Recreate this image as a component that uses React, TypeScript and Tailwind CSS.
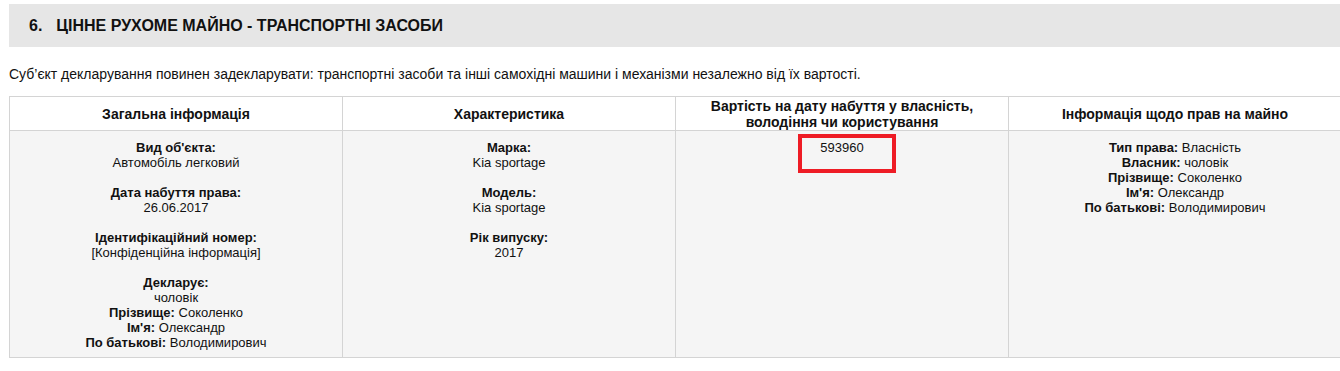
import React from "react";

type Line = { label?: string; value?: string };

function Block({ lines }: { lines: Line[] }) {
  return (
    <div>
      {lines.map((l, i) => (
        <div key={i}>
          {l.label && <span className="font-bold">{l.label}</span>}
          {l.label && l.value ? " " : null}
          {l.value}
        </div>
      ))}
    </div>
  );
}

function Stack({ label, value }: Line) {
  return (
    <div>
      <div className="font-bold">{label}</div>
      <div>{value}</div>
    </div>
  );
}

const headers = [
  "Загальна інформація",
  "Характеристика",
  "Вартість на дату набуття у власність, володіння чи користування",
  "Інформація щодо прав на майно",
];

export default function App() {
  return (
    <div className="min-h-[371px] bg-white text-[13px] leading-[15px] text-[#111]" style={{ fontFamily: '"Liberation Sans", Arial, sans-serif' }}>
      <div className="pt-[4px] pl-[9px]">
        <div className="flex h-[43px] items-center bg-[#e6e6e6] pl-[20px] text-[16px] font-bold text-[#111]">
          <span>6.</span>
          <span className="ml-[14px]">ЦІННЕ РУХОМЕ МАЙНО - ТРАНСПОРТНІ ЗАСОБИ</span>
        </div>
      </div>

      <p className="mt-[19px] pl-[9px] text-[14px] leading-[16px]">
        Суб’єкт декларування повинен задекларувати: транспортні засоби та інші самохідні машини і механізми незалежно від їх вартості.
      </p>

      <div className="mt-[14px] overflow-hidden pl-[9px]">
        <table className="w-[1332px] table-fixed border-collapse text-center">
          <thead>
            <tr className="h-[34px]">
              {headers.map((h) => (
                <th key={h} className="w-[333px] border border-[#d4d4d4] bg-white px-[30px] text-[14px] font-bold leading-[16px]">
                  {h}
                </th>
              ))}
            </tr>
          </thead>
          <tbody>
            <tr className="bg-[#f5f5f5] align-top">
              <td className="border border-[#d4d4d4] pt-[9px] pb-[7px]">
                <div className="flex flex-col gap-[15px]">
                  <Stack label="Вид об'єкта:" value="Автомобіль легковий" />
                  <Stack label="Дата набуття права:" value="26.06.2017" />
                  <Stack label="Ідентифікаційний номер:" value="[Конфіденційна інформація]" />
                  <div>
                    <div className="font-bold">Декларує:</div>
                    <div>чоловік</div>
                    <Block
                      lines={[
                        { label: "Прізвище:", value: "Соколенко" },
                        { label: "Ім'я:", value: "Олександр" },
                        { label: "По батькові:", value: "Володимирович" },
                      ]}
                    />
                  </div>
                </div>
              </td>
              <td className="border border-[#d4d4d4] pt-[9px] pb-[7px]">
                <div className="flex flex-col gap-[15px]">
                  <Stack label="Марка:" value="Kia sportage" />
                  <Stack label="Модель:" value="Kia sportage" />
                  <Stack label="Рік випуску:" value="2017" />
                </div>
              </td>
              <td className="border border-[#d4d4d4] pt-[9px] pb-[7px]">
                <div className="relative">
                  <div>593960</div>
                  <div className="absolute top-[-6px] left-[122px] h-[39px] w-[98px] border-[4px] border-[#ee1c25]" />
                </div>
              </td>
              <td className="border border-[#d4d4d4] pt-[9px] pb-[7px]">
                <Block
                  lines={[
                    { label: "Тип права:", value: "Власність" },
                    { label: "Власник:", value: "чоловік" },
                    { label: "Прізвище:", value: "Соколенко" },
                    { label: "Ім'я:", value: "Олександр" },
                    { label: "По батькові:", value: "Володимирович" },
                  ]}
                />
              </td>
            </tr>
          </tbody>
        </table>
      </div>
    </div>
  );
}
